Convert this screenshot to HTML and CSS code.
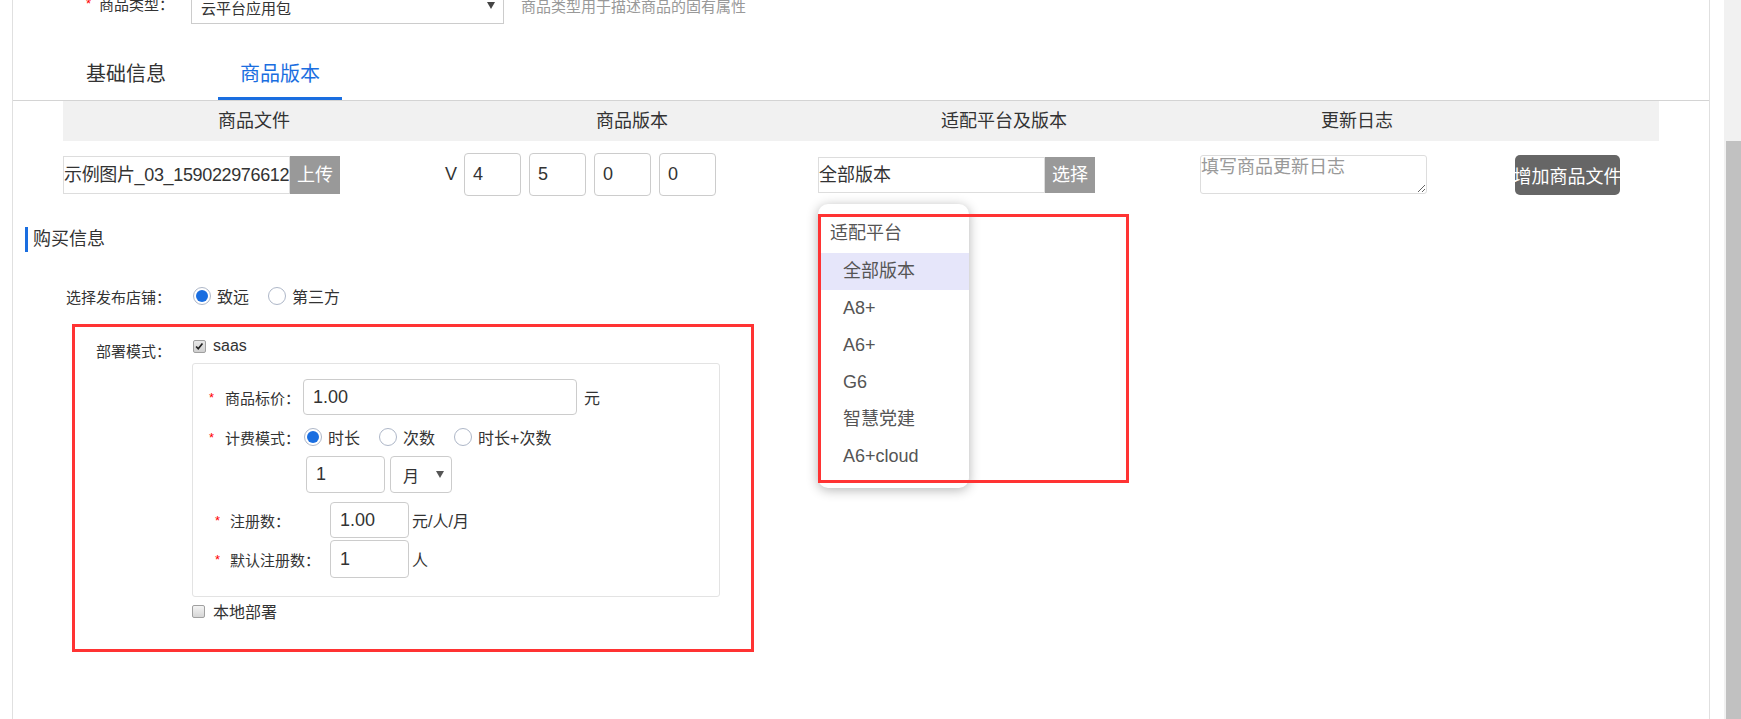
FILE: index.html
```html
<!DOCTYPE html>
<html lang="zh-CN">
<head>
<meta charset="utf-8">
<title>商品版本</title>
<link rel="stylesheet" href="styles.css">
</head>
<body>
<div class="app">
  <div class="viewport">
    <div class="panel">
      <div class="type-row">
        <span class="req">*</span>
        <span class="type-label">商品类型：</span>
        <div class="top-select"><span>云平台应用包</span><span class="caret"></span></div>
        <span class="help">商品类型用于描述商品的固有属性</span>
      </div>

      <div class="tabs">
        <div class="tab">基础信息</div>
        <div class="tab active">商品版本</div>
      </div>

      <div class="ver-head">
        <div>商品文件</div><div>商品版本</div><div>适配平台及版本</div><div>更新日志</div><div></div>
      </div>

      <div class="ver-row">
        <div class="file-group">
          <div class="file-input">示例图片_03_159022976612</div>
          <div class="gray-btn">上传</div>
        </div>
        <span class="v-label">V</span>
        <div class="ver-inputs">
          <div class="ver-input">4</div>
          <div class="ver-input">5</div>
          <div class="ver-input">0</div>
          <div class="ver-input">0</div>
        </div>
        <div class="platform">
          <div class="plat-input">全部版本</div>
          <div class="gray-btn plat-btn">选择</div>
          <div class="dropdown">
            <div class="dd-head">适配平台</div>
            <div class="dd-item hl">全部版本</div>
            <div class="dd-item">A8+</div>
            <div class="dd-item">A6+</div>
            <div class="dd-item">G6</div>
            <div class="dd-item">智慧党建</div>
            <div class="dd-item">A6+cloud</div>
          </div>
          <div class="mark mark-drop"></div>
        </div>
        <textarea class="log" placeholder="填写商品更新日志"></textarea>
        <div class="add-btn">增加商品文件</div>
      </div>

      <div class="sec-title">购买信息</div>

      <div class="store-row">
        <span class="lbl">选择发布店铺：</span>
        <div class="radios">
          <span class="opt"><span class="radio on"></span>致远</span>
          <span class="opt"><span class="radio"></span>第三方</span>
        </div>
      </div>

      <div class="deploy">
        <div class="deploy-label">部署模式：</div>
        <div class="deploy-body">
          <div class="check-row">
            <span class="cbox on"><svg viewBox="0 0 13 13" width="11" height="11"><path d="M2.5 6.5 L5 9.2 L10 3" fill="none" stroke="#222" stroke-width="2"/></svg></span>saas
          </div>
          <div class="sub-box">
            <div class="sf-row row-a">
              <span class="star">*</span>
              <span class="sf-lbl">商品标价：</span>
              <div class="txt-input price">1.00</div>
              <span class="unit">元</span>
            </div>
            <div class="sf-row row-b">
              <span class="star">*</span>
              <span class="sf-lbl">计费模式：</span>
              <div class="radios radios-b">
                <span class="opt"><span class="radio on"></span>时长</span>
                <span class="opt"><span class="radio"></span>次数</span>
                <span class="opt"><span class="radio"></span>时长+次数</span>
              </div>
            </div>
            <div class="sf-row row-c">
              <div class="txt-input num">1</div>
              <div class="unit-select"><span>月</span><span class="caret"></span></div>
            </div>
            <div class="sf-row row-d">
              <span class="star star-d">*</span>
              <span class="sf-lbl lbl-d">注册数：</span>
              <div class="txt-input num">1.00</div>
              <span class="unit unit-d">元/人/月</span>
            </div>
            <div class="sf-row row-e">
              <span class="star star-d">*</span>
              <span class="sf-lbl lbl-d">默认注册数：</span>
              <div class="txt-input num">1</div>
              <span class="unit unit-d">人</span>
            </div>
          </div>
          <div class="check-row local-row">
            <span class="cbox"></span>本地部署
          </div>
        </div>
      </div>
    </div>
  </div>
  <div class="scrollbar"><div class="thumb"></div></div>
</div>
</body>
</html>
```

FILE: styles.css
```css
* { box-sizing: border-box; }
html, body { margin: 0; padding: 0; }
body {
  font-family: "Liberation Sans", "Noto Sans CJK SC", sans-serif;
  color: #333;
  background: #fff;
  overflow: hidden;
  width: 1741px;
  height: 719px;
}
.app { display: flex; height: 719px; }
.viewport { width: 1724px; height: 719px; padding-left: 12px; overflow: hidden; }
.panel {
  display: flow-root;
  width: 1698px;
  height: 719px;
  border-left: 1px solid #e0e0e0;
  border-right: 1px solid #e0e0e0;
}
.scrollbar { width: 17px; background: #f1f1f1; display: flex; flex-direction: column; }
.scrollbar .thumb { margin: 141px 0 0 2px; flex: 1; background: #c1c1c1; }

/* type row */
.type-row {
  display: flex;
  align-items: center;
  height: 34px;
  margin-top: -10px;
  padding-left: 73px;
  font-size: 15px;
}
.req { color: #f00; width: 13px; font-size: 13px; align-self: flex-start; padding-top: 6px; }
.type-label { width: 92px; line-height: 20px; padding-bottom: 4px; }
.top-select {
  width: 313px;
  height: 34px;
  border: 1px solid #ccc;
  display: flex;
  align-items: center;
  justify-content: space-between;
  padding: 0 8px 0 9px;
}
.caret {
  width: 0; height: 0;
  border-left: 4px solid transparent;
  border-right: 4px solid transparent;
  border-top: 7px solid #444;
}
.top-select .caret { margin-top: -4px; }
.help { margin-left: 17px; color: #999; padding-bottom: 4px; }

/* tabs */
.tabs { display: flex; padding: 28px 0 0 51px; border-bottom: 1px solid #d4d4d4; }
.tab {
  padding: 0 22px;
  margin-right: 30px;
  font-size: 20px;
  line-height: 45px;
  border-bottom: 3px solid transparent;
}
.tab.active { color: #1a6ee0; border-bottom-color: #1a6ee0; }

/* version table */
.ver-head {
  margin-left: 50px;
  width: 1596px;
  height: 40px;
  background: #f1f1f1;
  display: grid;
  grid-template-columns: 382px 374px 370px 336px 134px;
  font-size: 18px;
  line-height: 40px;
  text-align: center;
}
.ver-row {
  margin: 12px 0 0 50px;
  height: 43px;
  display: flex;
  align-items: center;
  font-size: 18px;
}
.file-group { display: flex; }
.file-input {
  width: 227px;
  height: 38px;
  border: 1px solid #ddd;
  line-height: 36px;
  letter-spacing: -0.35px;
  white-space: nowrap;
  overflow: hidden;
}
.gray-btn {
  width: 50px;
  height: 38px;
  background: #999;
  color: #fff;
  line-height: 38px;
  text-align: center;
}
.v-label { margin-left: 105px; }
.ver-inputs { display: flex; gap: 8px; margin-left: 7px; }
.ver-input {
  width: 57px;
  height: 43px;
  border: 1px solid #ccc;
  border-radius: 4px;
  padding-left: 8px;
  line-height: 41px;
}
.platform { position: relative; display: flex; margin-left: 102px; }
.plat-input { width: 227px; height: 36px; border: 1px solid #ddd; line-height: 34px; }
.plat-btn { height: 36px; line-height: 36px; }
.dropdown {
  position: absolute;
  left: 0;
  top: 47px;
  width: 151px;
  height: 284px;
  background: #fff;
  border-radius: 10px;
  box-shadow: 0 2px 12px rgba(0, 0, 0, 0.3);
  padding-top: 10px;
  color: #555;
  font-size: 18px;
  z-index: 2;
}
.dd-head { height: 39px; line-height: 39px; padding-left: 12px; }
.dd-item { height: 37px; line-height: 37px; padding-left: 25px; }
.dd-item.hl { background: #e6e6fa; }
.mark { position: absolute; border: 3px solid #f33; z-index: 3; }
.mark-drop { left: 0; top: 57px; width: 311px; height: 269px; }

.log {
  margin-left: 105px;
  width: 227px;
  height: 39px;
  border: 1px solid #ddd;
  border-radius: 3px;
  padding: 0;
  font: 18px/22px "Liberation Sans", "Noto Sans CJK SC", sans-serif;
  color: #333;
  resize: both;
}
.log::placeholder { color: #999; }
.add-btn {
  margin-left: 88px;
  width: 105px;
  height: 40px;
  background: #666;
  color: #fff;
  border-radius: 5px;
  display: flex;
  align-items: center;
  justify-content: center;
  white-space: nowrap;
}

/* purchase info */
.sec-title {
  margin: 31px 0 0 12px;
  height: 25px;
  line-height: 25px;
  border-left: 3px solid #1a6ee0;
  padding-left: 5px;
  font-size: 18px;
}
.store-row { display: flex; align-items: center; margin-top: 29px; height: 30px; }
.lbl { width: 158px; text-align: right; font-size: 15px; }
.radios { display: flex; align-items: center; margin-left: 22px; font-size: 16px; }
.opt { display: flex; align-items: center; margin-right: 19px; }
.radio {
  width: 18px;
  height: 18px;
  border-radius: 50%;
  border: 1px solid #aeb7c8;
  background: #fff;
  margin-right: 6px;
  display: flex;
  align-items: center;
  justify-content: center;
}
.radio.on::after {
  content: "";
  width: 12px;
  height: 12px;
  border-radius: 50%;
  background: #1a6ee0;
}

.deploy {
  margin: 13px 0 0 59px;
  width: 682px;
  height: 328px;
  border: 3px solid #f33;
  display: flex;
}
.deploy-label {
  width: 96px;
  margin-right: 21px;
  padding-top: 15px;
  text-align: right;
  font-size: 15px;
  line-height: 20px;
}
.deploy-body { padding-top: 9px; }
.check-row { display: flex; align-items: center; height: 20px; font-size: 16px; }
.cbox {
  width: 13px;
  height: 13px;
  margin: 0 7px 0 1px;
  border: 1px solid #a0a0a0;
  border-radius: 2px;
  background: linear-gradient(#f4f4f4, #d6d6d6);
  display: flex;
  align-items: center;
  justify-content: center;
}
.cbox.on { background: linear-gradient(#e8e8e8, #cfcfcf); }
.local-row { margin-top: 4px; }
.local-row .cbox { margin-left: 0; margin-right: 8px; }

.sub-box {
  margin-top: 7px;
  width: 528px;
  height: 234px;
  border: 1px solid #e3e3e3;
  border-radius: 3px;
  padding: 15px 0 0 16px;
}
.sf-row { display: flex; align-items: center; }
.star { color: #f00; width: 16px; font-size: 13px; }
.sf-lbl { width: 78px; font-size: 15px; }
.txt-input {
  height: 36px;
  border: 1px solid #ccc;
  border-radius: 4px;
  padding-left: 9px;
  font-size: 18px;
  line-height: 34px;
}
.price { width: 274px; }
.unit { margin-left: 7px; font-size: 16px; }
.row-a { height: 36px; }
.row-b { margin-top: 9px; height: 26px; }
.radios-b { margin-left: 1px; }
.row-c { margin-top: 6px; padding-left: 97px; }
.num { width: 79px; height: 37px; line-height: 35px; }
.unit-select {
  margin-left: 5px;
  width: 62px;
  height: 37px;
  border: 1px solid #ccc;
  border-radius: 4px;
  display: flex;
  align-items: center;
  justify-content: space-between;
  padding: 0 7px 0 12px;
  font-size: 16px;
}
.unit-select .caret { border-top-color: #555; }
.row-d { margin-top: 9px; }
.row-d .num { height: 36px; }
.row-e { margin-top: 2px; }
.row-e .num { height: 38px; line-height: 36px; }
.star-d { margin-left: 6px; width: 15px; }
.lbl-d { width: 100px; }
.unit-d { margin-left: 3px; }
```
